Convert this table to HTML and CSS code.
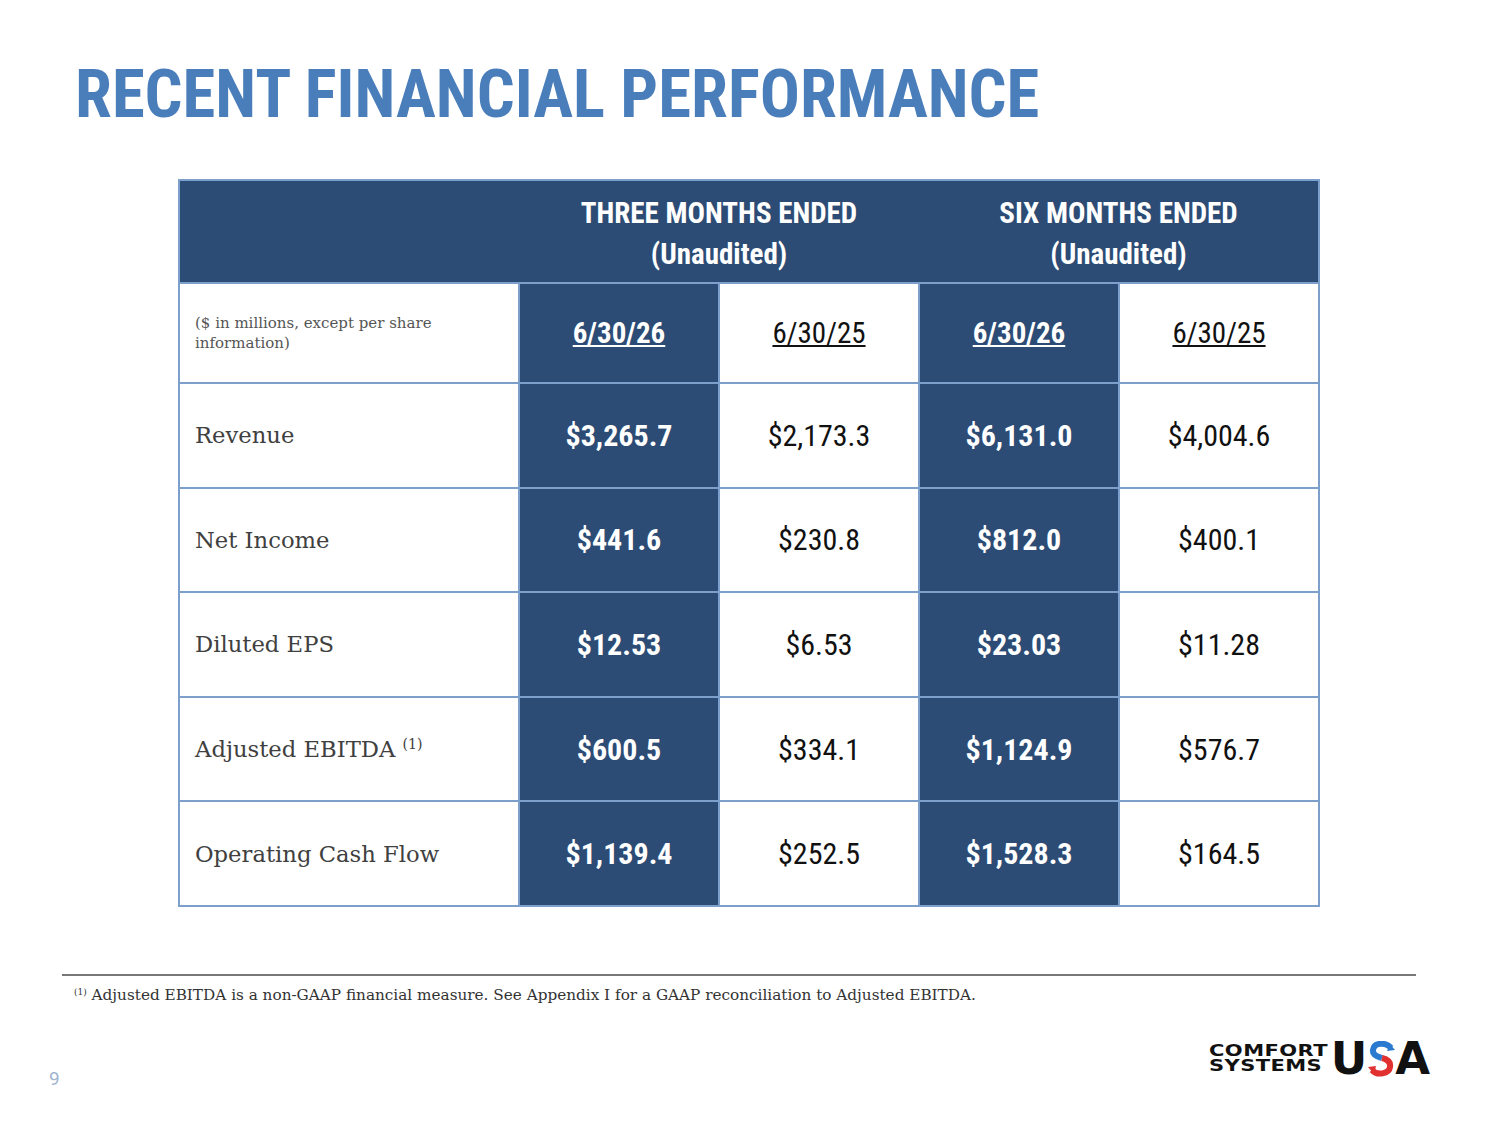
FILE: index.html
```html
<!DOCTYPE html>
<html>
<head>
<meta charset="utf-8">
<link rel="stylesheet" href="styles.css">
</head>
<body>
<div class="slide">
  <h1 class="title">RECENT FINANCIAL PERFORMANCE</h1>
  <div class="table-wrap">
    <table class="fin">
      <colgroup>
        <col class="c-label"><col class="c-num"><col class="c-num"><col class="c-num"><col class="c-num">
      </colgroup>
      <thead>
        <tr class="head">
          <th class="h-first"></th>
          <th colspan="2" class="h-mid">THREE MONTHS ENDED<br>(Unaudited)</th>
          <th colspan="2" class="h-last">SIX MONTHS ENDED<br>(Unaudited)</th>
        </tr>
      </thead>
      <tbody>
        <tr class="dates">
          <td class="label small">($ in millions, except per share information)</td>
          <td class="dark"><u>6/30/26</u></td>
          <td class="light"><u>6/30/25</u></td>
          <td class="dark"><u>6/30/26</u></td>
          <td class="light"><u>6/30/25</u></td>
        </tr>
        <tr>
          <td class="label">Revenue</td>
          <td class="dark">$3,265.7</td><td class="light">$2,173.3</td>
          <td class="dark">$6,131.0</td><td class="light">$4,004.6</td>
        </tr>
        <tr>
          <td class="label">Net Income</td>
          <td class="dark">$441.6</td><td class="light">$230.8</td>
          <td class="dark">$812.0</td><td class="light">$400.1</td>
        </tr>
        <tr>
          <td class="label">Diluted EPS</td>
          <td class="dark">$12.53</td><td class="light">$6.53</td>
          <td class="dark">$23.03</td><td class="light">$11.28</td>
        </tr>
        <tr>
          <td class="label">Adjusted EBITDA <sup>(1)</sup></td>
          <td class="dark">$600.5</td><td class="light">$334.1</td>
          <td class="dark">$1,124.9</td><td class="light">$576.7</td>
        </tr>
        <tr>
          <td class="label">Operating Cash Flow</td>
          <td class="dark">$1,139.4</td><td class="light">$252.5</td>
          <td class="dark">$1,528.3</td><td class="light">$164.5</td>
        </tr>
      </tbody>
    </table>
  </div>
  <div class="footnote">
    <p><sup>(1)</sup> Adjusted EBITDA is a non-GAAP financial measure. See Appendix I for a GAAP reconciliation to Adjusted EBITDA.</p>
  </div>
  <div class="bottom">
    <span class="page">9</span>
    <div class="logo">
      <div class="logo-words"><span>COMFORT</span><span>SYSTEMS</span></div>
      <span class="logo-big">U</span>
      <svg class="logo-s" width="30" height="36" viewBox="0 0 30 36">
        <path d="M25 7 C20 1, 8 1, 7 9 C6 15, 13 16, 16 17" fill="none" stroke="#2a7bd0" stroke-width="6" stroke-linecap="butt"/>
        <path d="M24 3 L29 9 L21 10 Z" fill="#2a7bd0"/>
        <path d="M16 17 C20 18, 25 20, 24 26 C23 33, 11 35, 6 29" fill="none" stroke="#e0302f" stroke-width="6" stroke-linecap="butt"/>
        <path d="M8 33 L2 26 L10 25 Z" fill="#e0302f"/>
      </svg>
      <span class="logo-big">A</span>
    </div>
  </div>
</div>
</body>
</html>
```
FILE: styles.css
```css
html, body {
  margin: 0;
  padding: 0;
  background: #ffffff;
}
.slide {
  width: 1500px;
  height: 1125px;
  position: relative;
  overflow: hidden;
  display: flex;
  flex-direction: column;
}
.title {
  margin: 57px 0 0 75px;
  font-family: "Roboto Condensed", "Liberation Sans Narrow", "DejaVu Sans Condensed", sans-serif;
  font-weight: 700;
  font-size: 66.7px;
  line-height: 74px;
  color: #4a7ebb;
  letter-spacing: 0;
}
.table-wrap {
  margin: 48px 0 0 178px;
}
.fin {
  border-collapse: collapse;
  table-layout: fixed;
  width: 1142px;
}
.c-label { width: 340px; }
.c-num { width: 200px; }
.fin th, .fin td {
  border: 2px solid #7d9fcc;
  padding: 0;
  text-align: center;
  vertical-align: middle;
}
.head th {
  background: #2c4c75;
  height: 97px;
  color: #ffffff;
  font-family: "Roboto Condensed", "Liberation Sans Narrow", "DejaVu Sans Condensed", sans-serif;
  font-weight: 700;
  font-size: 29px;
  line-height: 41px;
  padding-top: 4px;
}
.head th.h-first { border-right-style: hidden; }
.head th.h-mid { border-left-style: hidden; border-right-style: hidden; }
.head th.h-last { border-left-style: hidden; }
.fin tbody td {
  height: 102.6px;
  font-family: "Roboto Condensed", "Liberation Sans Narrow", "DejaVu Sans Condensed", sans-serif;
  font-size: 30px;
}
.fin tr.dates td { height: 98px; }
.fin td.dark {
  background: #2c4c75;
  color: #ffffff;
  font-weight: 700;
}
.fin td.light {
  background: #ffffff;
  color: #111111;
  font-weight: 400;
}
.fin tr.dates td.dark, .fin tr.dates td.light { font-size: 29px; }
.fin td.label {
  text-align: left;
  padding-left: 15px;
  font-family: "DejaVu Serif", serif;
  font-size: 22.7px;
  color: #404040;
  font-weight: 400;
}
.fin td.label.small {
  font-size: 15px;
  line-height: 20px;
  color: #555555;
  padding-right: 60px;
}
.fin td.label sup {
  font-size: 14px;
  vertical-align: 8px;
  line-height: 0;
}
.footnote {
  margin: 67px 84px 0 62px;
  border-top: 2px solid #777777;
}
.footnote p {
  margin: 10px 0 0 12px;
  font-family: "DejaVu Serif", serif;
  font-size: 15.25px;
  color: #333333;
}
.footnote sup {
  font-size: 9px;
  vertical-align: 5px;
  line-height: 0;
}
.bottom {
  display: flex;
  justify-content: space-between;
  align-items: flex-start;
  margin: 37px 70px 0 49px;
}
.page {
  margin-top: 26px;
  font-family: "Roboto", sans-serif;
  font-size: 19px;
  color: #9fb4cf;
}
.logo {
  display: flex;
  align-items: center;
}
.logo-words {
  display: flex;
  flex-direction: column;
  font-family: "DejaVu Sans", sans-serif;
  font-weight: 700;
  font-size: 15px;
  line-height: 15px;
  color: #111111;
  letter-spacing: 0.3px;
  transform: scaleX(1.4);
  transform-origin: right center;
  margin-right: 3px;
}
.logo-big {
  font-family: "DejaVu Sans", sans-serif;
  font-weight: 700;
  font-size: 45px;
  line-height: 36px;
  color: #111111;
}
.logo-s { display: block; margin: 0 -1px; }
```
